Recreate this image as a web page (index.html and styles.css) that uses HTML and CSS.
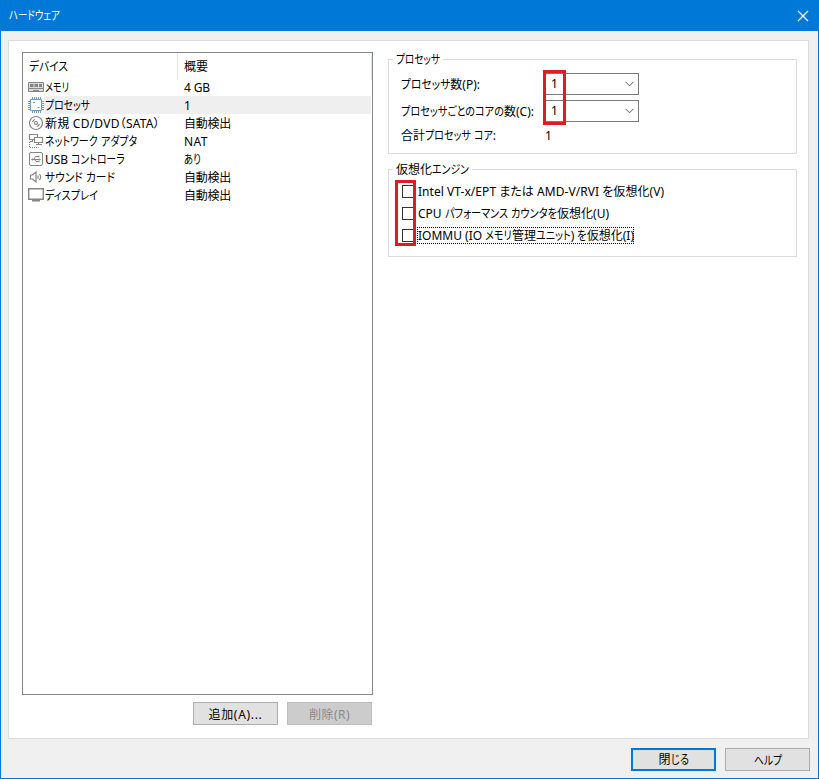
FILE: index.html
```html
<!DOCTYPE html>
<html lang="ja">
<head>
<meta charset="utf-8">
<title>ハードウェア</title>
<link rel="stylesheet" href="styles.css">
</head>
<body>
<div class="window">
  <header class="titlebar">
    <span data-width="51">ハードウェア</span>
    <svg class="close" width="12" height="12" viewBox="0 0 12 12"><path d="M1 1L11 11M11 1L1 11"/></svg>
  </header>
  <main class="panel">
    <section class="left">
      <div class="devices">
        <div class="head"><div><span data-width="39">デバイス</span></div><div><span data-width="24">概要</span></div></div>
        <div class="row">
          <svg width="16" height="18" viewBox="0 0 16 18"><path class="light" d="M0 4h16v10H0z"/><path d="M.5 4.500h15v9H.5zM0 10.500h16M5 12.500h6"/><path class="fill" d="M2 6h3.500v3H2zM6.500 6H10v3H6.500zM11 6h3v3h-3z"/></svg>
          <div class="name"><span data-width="24">メモリ</span></div><div class="value"><span data-width="26">4 GB</span></div>
        </div>
        <div class="row selected">
          <svg class="blue" width="16" height="18" viewBox="0 0 16 18"><path class="chip" d="M2.500 3.500h11v11h-11z"/><path d="M4.500 1v2M6.500 1v2M8.500 1v2M10.500 1v2M12.500 1v2M4.500 15v2M6.500 15v2M8.500 15v2M10.500 15v2M12.500 15v2M0 5.500h2M0 7.500h2M0 9.500h2M0 11.500h2M0 13.500h2M14 5.500h2M14 7.500h2M14 9.500h2M14 11.500h2M14 13.500h2M5 6.500h2M9.500 11.500h2"/></svg>
          <div class="name"><span data-width="45">プロセッサ</span></div><div class="value"><span>1</span></div>
        </div>
        <div class="row">
          <svg class="bold" width="16" height="18" viewBox="0 0 16 18"><circle cx="8" cy="9" r="6.500"/><circle cx="8" cy="9" r="1.500"/><path d="M4.500 8a4 4 0 0 1 2.500-2.500M9 12.500a4 4 0 0 0 2.500-2.500"/></svg>
          <div class="name"><span data-width="115">新規 CD/DVD（SATA）</span></div><div class="value"><span data-width="47">自動検出</span></div>
        </div>
        <div class="row">
          <svg class="bold" width="16" height="18" viewBox="0 0 16 18"><path d="M1.500 2.500h8v5h-8zM4.500 7.500v2M2 9.500h3"/><path class="paper" d="M6.500 5.500h8v5h-8z"/><path d="M10.500 10.500v2M8 12.500h6"/><path stroke-dasharray="1 1" d="M1.500 10v5.500h9"/></svg>
          <div class="name"><span data-width="92">ネットワーク アダプタ</span></div><div class="value"><span data-width="24">NAT</span></div>
        </div>
        <div class="row">
          <svg width="16" height="18" viewBox="0 0 16 18"><rect x="1.500" y="2.500" width="13" height="13" rx="1.500"/><path d="M4 9.500h8M6 9l1.500-2.500H10M6.500 9.500L8 11.500h2"/><path class="fill" d="M4.700 8L3 9.500 4.700 11zM9.500 5.700h2v1.600h-2zM9.500 10.700h2v1.600h-2zM11.500 8.300l1.500 1.200-1.500 1.200z"/></svg>
          <div class="name"><span data-width="80">USB コントローラ</span></div><div class="value"><span data-width="17">あり</span></div>
        </div>
        <div class="row">
          <svg class="bold" width="16" height="18" viewBox="0 0 16 18"><path d="M2.500 7h2L8 4v10L4.500 11h-2zM9.700 7.500a3 3 0 0 1 0 3M11.500 6a5 5 0 0 1 0 6"/></svg>
          <div class="name"><span data-width="70">サウンド カード</span></div><div class="value"><span data-width="47">自動検出</span></div>
        </div>
        <div class="row">
          <svg width="16" height="18" viewBox="0 0 16 18"><path d="M.700 2.700h14.600v10.600H.700zM4 14.800h8" stroke-width="1.400"/></svg>
          <div class="name"><span data-width="53">ディスプレイ</span></div><div class="value"><span data-width="47">自動検出</span></div>
        </div>
      </div>
      <div class="actions">
        <button><span data-width="54">追加(A)...</span></button>
        <button class="disabled" disabled><span data-width="41">削除(R)</span></button>
      </div>
    </section>
    <section class="right">
      <div class="group processors">
        <div class="legend"><span data-width="44">プロセッサ</span></div>
        <div class="field"><div class="label"><span data-width="79">プロセッサ数(P):</span></div><div class="combo"><span>1</span><svg width="9" height="6" viewBox="0 0 9 6"><path d="M.5 .8L4.5 4.8L8.5 .8"/></svg></div></div>
        <div class="field"><div class="label"><span data-width="133">プロセッサごとのコアの数(C):</span></div><div class="combo"><span>1</span><svg width="9" height="6" viewBox="0 0 9 6"><path d="M.5 .8L4.5 4.8L8.5 .8"/></svg></div></div>
        <div class="field total"><div class="label"><span data-width="95">合計プロセッサ コア:</span></div><span>1</span></div>
        <i class="mark mark-values"></i>
      </div>
      <div class="group engine">
        <div class="legend"><span data-width="73">仮想化エンジン</span></div>
        <div class="option"><i class="box"></i><span data-width="246">Intel VT-x/EPT または AMD-V/RVI を仮想化(V)</span></div>
        <div class="option"><i class="box"></i><span data-width="191">CPU パフォーマンス カウンタを仮想化(U)</span></div>
        <div class="option focused"><i class="box"></i><span data-width="216">IOMMU (IO メモリ管理ユニット) を仮想化(I)</span></div>
        <i class="mark mark-boxes"></i>
      </div>
    </section>
  </main>
  <footer>
    <button class="default"><span data-width="30">閉じる</span></button>
    <button><span data-width="28">ヘルプ</span></button>
  </footer>
</div>
<script src="fit.js"></script>
</body>
</html>
```
FILE: styles.css
```css
* { box-sizing: border-box; }
body {
  margin: 0;
  font: 12px/18px "Noto Sans", "Noto Sans CJK JP", sans-serif;
  font-feature-settings: "palt";
  color: #000;
}
span { white-space: nowrap; }
.kana { display: inline-block; transform-origin: 0 50%; font-style: normal; line-height: inherit; }
svg { fill: none; stroke: #858585; stroke-width: 1; flex: none; }
.window {
  width: 819px;
  height: 779px;
  display: flex;
  flex-direction: column;
  background: #f0f0f0;
  border: 1px solid #0078d7;
}
.titlebar {
  height: 30px;
  flex: none;
  display: flex;
  align-items: center;
  justify-content: space-between;
  padding: 0 9px 1px 8px;
  color: #fff;
  background: #0078d7;
}
.close { stroke: #fff; stroke-width: 1.3; }
.panel {
  width: 801px;
  height: 699px;
  flex: none;
  margin: 9px 0 0 7px;
  display: flex;
  gap: 15px;
  padding: 11px 11px 0 13px;
  background: #fff;
  border: 1px solid #dcdcdc;
}
.left { width: 351px; flex: none; }
.devices { height: 643px; border: 1px solid #828790; }
.head { display: grid; grid-template-columns: 155px 1fr; height: 25px; line-height: 27px; }
.head div { padding-left: 6px; border-right: 1px solid #e5e5e5; }
.row { display: flex; height: 18px; padding-left: 5px; }
.name { width: 134px; flex: none; padding-left: 1px; }
.value { flex: 1; padding-left: 6px; margin-right: 1px; }
.row.selected .name, .row.selected .value { background: #efefef; }
.name, .value { line-height: 19px; }
.light { fill: #ddd; stroke: none; }
.paper, .chip { fill: #fff; }
.fill { fill: #858585; stroke: none; }
.bold { stroke-width: 1.2; }
.blue { stroke: #6d9dbd; }
.actions { display: flex; justify-content: flex-end; gap: 9px; margin: 7px 1px 0 0; }
button {
  width: 85px;
  height: 23px;
  padding: 1px 0 0;
  font: inherit;
  font-feature-settings: inherit;
  line-height: 21px;
  color: #000;
  background: #e1e1e1;
  border: 1px solid #adadad;
}
.disabled { color: #898989; background: #ccc; border-color: #bfbfbf; }
.default { border: 2px solid #0078d7; line-height: 19px; padding-top: 0; }
.right { flex: 1; min-width: 0; padding-top: 7px; }
.group { position: relative; border: 1px solid #dcdcdc; }
.processors { height: 95px; padding: 13px 0 0 12px; margin-bottom: 15px; }
.engine { height: 88px; padding: 10px 0 0 13px; }
.legend { position: absolute; left: 4px; top: -9px; padding: 0 3px; background: #fff; }
.field { display: flex; height: 27px; }
.label { width: 143px; flex: none; line-height: 23px; }
.combo {
  width: 95px;
  height: 22px;
  display: flex;
  align-items: center;
  justify-content: space-between;
  padding: 0 4px 0 6px;
  border: 1px solid #7a7a7a;
}
.combo svg { stroke: #555; }
.total, .total .label { line-height: 18px; }
.total > span { padding-left: 1px; }
.option { display: flex; align-items: center; height: 22px; gap: 2px; }
.option span { line-height: 17px; padding-left: 1px; }
.focused span { outline: 1px dotted #000; outline-offset: -1px; }
.box { width: 13px; height: 13px; flex: none; border: 1px solid #333; background: #fff; }
.mark { position: absolute; border: 3px solid #df1c24; }
.mark-values { left: 154px; top: 10px; width: 23px; height: 55px; }
.mark-boxes { left: 6px; top: 10px; width: 21px; height: 66px; }
footer { display: flex; justify-content: flex-end; gap: 9px; padding: 9px 8px 0 0; }
```
FILE: fit.js
```js
// Condenses kana runs so each caption fills its nominal width.
document.querySelectorAll("[data-width]").forEach((el) => {
  const count = [...el.textContent].length;
  el.innerHTML = el.textContent.replace(/[\u3041-\u30ff]+/g, '<em class="kana">$&</em>');
  const range = document.createRange();
  range.selectNodeContents(el);
  const natural = range.getBoundingClientRect().width;
  const runs = [...el.querySelectorAll(".kana")];
  const widths = runs.map((run) => run.getBoundingClientRect().width);
  const kana = widths.reduce((sum, width) => sum + width, 0);
  const target = Number(el.dataset.width);
  const ideal = kana ? (target - natural + kana) / kana : 1;
  const scale = Math.max(0.74, Math.min(1, ideal));
  runs.forEach((run, i) => {
    run.style.transform = `scaleX(${scale})`;
    run.style.marginRight = -(1 - scale) * widths[i] + "px";
  });
  const rest = target - natural + kana * (1 - scale);
  el.style.letterSpacing = rest / count + "px";
});
```
